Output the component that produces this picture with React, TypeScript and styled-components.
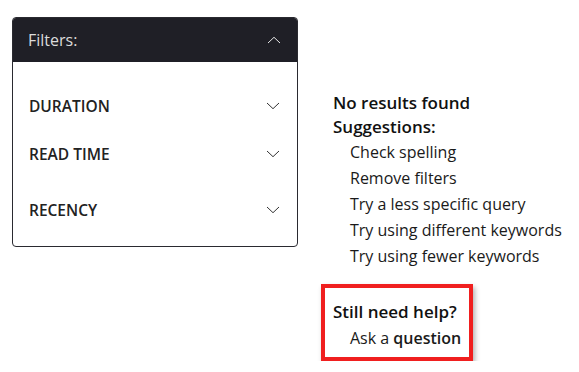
import styled, { createGlobalStyle } from "styled-components";

const GlobalStyle = createGlobalStyle`
  body {
    margin: 0;
    font-family: "Open Sans", "Noto Sans", sans-serif;
    color: #1a1a1a;
    background: #ffffff;
  }
`;

interface ItemProps {
  extraTop?: boolean;
}

const filters = ["DURATION", "READ TIME", "RECENCY"];
const suggestions = [
  "Check spelling",
  "Remove filters",
  "Try a less specific query",
  "Try using different keywords",
  "Try using fewer keywords",
];

function Chevron({ up }: { up?: boolean }) {
  return (
    <svg width="14" height="8" viewBox="0 0 14 8" fill="none">
      <path
        d={up ? "M1 7L7 1.3L13 7" : "M1 1L7 6.7L13 1"}
        stroke={up ? "#e6e6e6" : "#333"}
        strokeWidth="1"
      />
    </svg>
  );
}

export default function App() {
  return (
    <>
      <GlobalStyle />
      <Page>
        <FilterPanel>
          <PanelHeader>
            Filters:
            <Chevron up />
          </PanelHeader>
          <PanelBody>
            {filters.map((f, i) => (
              <FilterItem key={f} extraTop={i === 2}>
                {f}
                <Chevron />
              </FilterItem>
            ))}
          </PanelBody>
        </FilterPanel>
        <Results>
          <Heading>No results found</Heading>
          <Heading>Suggestions:</Heading>
          <SuggestionList>
            {suggestions.map((s) => (
              <Suggestion key={s}>{s}</Suggestion>
            ))}
          </SuggestionList>
          <HelpBox>
            <Heading>Still need help?</Heading>
            <HelpLink>
              Ask a <strong>question</strong>
            </HelpLink>
          </HelpBox>
        </Results>
      </Page>
    </>
  );
}

const Page = styled.div`
  display: flex;
  align-items: flex-start;
  gap: 35px;
  padding: 17px 0 0 12px;
`;

const FilterPanel = styled.div`
  width: 286px;
  border: 1px solid #2a2a30;
  border-radius: 4px;
  overflow: hidden;
  box-sizing: border-box;
`;

const PanelHeader = styled.div`
  height: 45px;
  background: #1f1f26;
  color: #dcdcdc;
  font-size: 16px;
  display: flex;
  align-items: center;
  justify-content: space-between;
  padding: 0 17px 0 16px;
  margin: -1px -1px 0 -1px;
`;

const PanelBody = styled.div`
  padding: 20px 17px 12px 16px;
`;

const FilterItem = styled.div<ItemProps>`
  height: 48px;
  margin-top: ${(p) => (p.extraTop ? "8px" : "0")};
  display: flex;
  align-items: center;
  justify-content: space-between;
  font-size: 15.5px;
  font-weight: 600;
  color: #222;
`;

const Results = styled.div`
  margin-top: 74px;
  display: flex;
  flex-direction: column;
  align-items: flex-start;
`;

const Heading = styled.div`
  font-size: 17px;
  font-weight: 600;
  line-height: 24px;
  color: #111;
`;

const SuggestionList = styled.div`
  padding-left: 17px;
  margin-bottom: 15px;
`;

const Suggestion = styled.div`
  font-size: 16px;
  line-height: 26px;
  color: #1a1a1a;
`;

const HelpBox = styled.div`
  border: 4px solid #f01f1f;
  padding: 12px 8px 5px 8px;
  margin-left: -12px;
  box-shadow: 2px 3px 5px rgba(0, 0, 0, 0.3);
`;

const HelpLink = styled.div`
  font-size: 16px;
  line-height: 28px;
  padding-left: 17px;
  color: #1a1a1a;

  strong {
    font-weight: 600;
  }
`;
